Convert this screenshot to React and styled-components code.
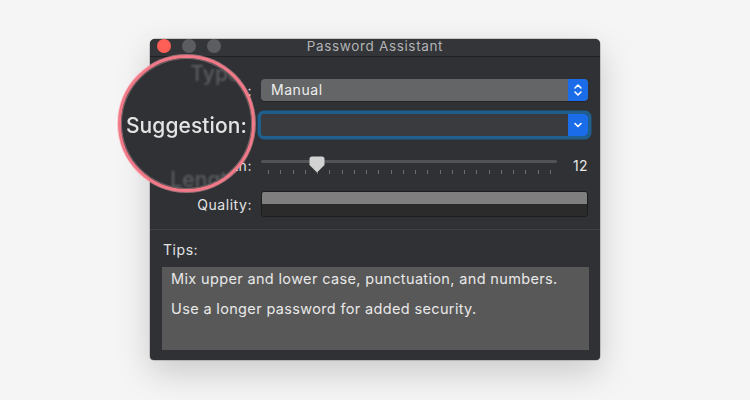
import React from 'react';
import styled, { createGlobalStyle } from 'styled-components';

const GlobalStyle = createGlobalStyle`
  html, body {
    margin: 0;
    padding: 0;
    background: #f5f5f5;
    font-family: Inter, "Noto Sans", "Liberation Sans", sans-serif;
  }
`;

const Page = styled.div`
  width: 750px;
  height: 400px;
  padding: 39px 0 0 150px;
  box-sizing: border-box;
  overflow: hidden;
`;

const Window = styled.div`
  position: relative;
  width: 450px;
  height: 321px;
  background: #2f3134;
  border-radius: 5px 5px 4px 4px;
  box-shadow: 0 12px 34px rgba(0, 0, 0, 0.18), 0 0 0 0.5px rgba(0, 0, 0, 0.3);
  display: flex;
  flex-direction: column;
`;

const TitleBar = styled.div`
  position: relative;
  height: 17px;
  flex: none;
  display: flex;
  align-items: flex-start;
  gap: 11px;
  padding-left: 7px;
  background: #333538;
  border-bottom: 1px solid #1f2022;
  border-radius: 5px 5px 0 0;
`;

const Light = styled.span`
  width: 14px;
  height: 14px;
  border-radius: 50%;
  background: ${(p) => p.color};
`;

const Title = styled.div`
  position: absolute;
  left: 0;
  right: 0;
  top: 0;
  height: 15px;
  line-height: 15px;
  text-align: center;
  font-size: 13.5px;
  color: #b2b3b5;
  letter-spacing: 0.65px;
`;

const Form = styled.div`
  display: flex;
  flex-direction: column;
  padding: 22px 12px 0 0;
`;

const Row = styled.div`
  display: grid;
  grid-template-columns: 102px 1fr;
  column-gap: 9px;
  align-items: center;
  height: ${(p) => p.h}px;
  margin-top: ${(p) => p.mt || 0}px;
`;

const Label = styled.div`
  text-align: right;
  font-size: 14px;
  letter-spacing: 0.55px;
  color: #e2e3e4;
`;

const Popup = styled.div`
  height: 22px;
  display: flex;
  border-radius: 4px;
  background: #646566;
  overflow: hidden;
  box-shadow: 0 1px 0 rgba(0, 0, 0, 0.25);
`;

const PopupText = styled.div`
  flex: 1;
  padding-left: 10px;
  line-height: 22px;
  font-size: 14px;
  letter-spacing: 0.55px;
  color: #ededed;
`;

const BlueButton = styled.div`
  width: 20px;
  flex: none;
  display: flex;
  align-items: center;
  justify-content: center;
  background: #1a6ce8;
  border-radius: 0 4px 4px 0;
`;

const Combo = styled(Popup)`
  background: #3a3b3e;
  box-shadow: 0 0 0 3.5px #1e5f8d;
  border-radius: 3px;
`;

const SliderRow = styled.div`
  display: flex;
  align-items: center;
`;

const Slider = styled.div`
  position: relative;
  flex: 1;
  height: 30px;
`;

const Track = styled.div`
  position: absolute;
  left: 0;
  right: 0;
  top: 10px;
  height: 3px;
  border-radius: 2px;
  background: #515357;
`;

const Ticks = styled.div`
  position: absolute;
  left: 7px;
  right: 6px;
  top: 20px;
  display: flex;
  justify-content: space-between;
`;

const Tick = styled.span`
  width: 1px;
  height: 4px;
  background: #6b6d70;
`;

const Thumb = styled.svg`
  position: absolute;
  left: 48px;
  top: 6px;
`;

const Value = styled.div`
  width: 31px;
  text-align: right;
  font-size: 14px;
  letter-spacing: 0.4px;
  color: #e6e6e6;
`;

const Meter = styled.div`
  height: 26px;
  box-sizing: border-box;
  border: 1px solid #1c1d1f;
  border-radius: 3px;
  overflow: hidden;
  display: flex;
  flex-direction: column;
`;

const MeterHalf = styled.div`
  flex: 1;
  background: ${(p) => p.color};
`;

const Separator = styled.div`
  height: 1px;
  background: #3f4145;
  margin-top: 12px;
`;

const Tips = styled.div`
  flex: 1;
  display: flex;
  flex-direction: column;
  padding: 12px 11px 10px 12px;
`;

const TipsLabel = styled.div`
  font-size: 14px;
  letter-spacing: 0.55px;
  color: #e2e3e4;
  margin-left: 1px;
  line-height: 16px;
`;

const TipsBox = styled.div`
  flex: 1;
  margin-top: 9px;
  background: #585858;
  padding: 3px 9px 0;
`;

const Tip = styled.p`
  margin: 0 0 12px;
  font-size: 14.5px;
  letter-spacing: 0.35px;
  line-height: 18px;
  color: #e8e8e8;
`;

const Magnifier = styled.div`
  position: absolute;
  left: -32px;
  top: 16px;
  width: 137px;
  height: 137px;
  box-sizing: border-box;
  border-radius: 50%;
  border: 3px solid #f17988;
  background: #2f3134;
  overflow: hidden;
  box-shadow: 0 0 0 1px rgba(255, 170, 180, 0.5), inset 0 0 0 1px rgba(255, 200, 205, 0.35);
  display: flex;
  flex-direction: column;
  align-items: flex-end;
  padding-right: 5px;
`;

const BigLabel = styled.div`
  font-size: 21px;
  font-weight: 500;
  line-height: 52px;
  letter-spacing: 0.1px;
  color: ${(p) => (p.dim ? '#5a5c60' : '#e4e4e4')};
  filter: blur(${(p) => (p.dim ? 1.2 : 0.3)}px);
  margin-top: ${(p) => p.mt || 0}px;
  white-space: nowrap;
`;

const Stepper = () => (
  <svg width="10" height="14" viewBox="0 0 10 14">
    <path d="M2 5 L5 2 L8 5 M2 9 L5 12 L8 9" fill="none" stroke="#fff" strokeWidth="1.5" strokeLinecap="round" strokeLinejoin="round" />
  </svg>
);

const Chevron = () => (
  <svg width="10" height="8" viewBox="0 0 10 8">
    <path d="M2 2.5 L5 5.5 L8 2.5" fill="none" stroke="#fff" strokeWidth="1.6" strokeLinecap="round" strokeLinejoin="round" />
  </svg>
);

const tips = [
  'Mix upper and lower case, punctuation, and numbers.',
  'Use a longer password for added security.',
];

export default function App() {
  return (
    <Page>
      <GlobalStyle />
      <Window>
        <TitleBar>
          <Light color="#fd5f57" />
          <Light color="#5c5d60" />
          <Light color="#5c5d60" />
          <Title>Password Assistant</Title>
        </TitleBar>

        <Form>
          <Row h={22}>
            <Label>Type:</Label>
            <Popup>
              <PopupText>Manual</PopupText>
              <BlueButton>
                <Stepper />
              </BlueButton>
            </Popup>
          </Row>
          <Row h={22} mt={13}>
            <Label>Suggestion:</Label>
            <Combo>
              <PopupText />
              <BlueButton>
                <Chevron />
              </BlueButton>
            </Combo>
          </Row>
          <Row h={30} mt={14}>
            <Label>Length:</Label>
            <SliderRow>
              <Slider>
                <Track />
                <Ticks>
                  {Array.from({ length: 24 }).map((_, i) => (
                    <Tick key={i} />
                  ))}
                </Ticks>
                <Thumb width="16" height="17" viewBox="0 0 16 17">
                  <path d="M3 0.5 H13 Q15.5 0.5 15.5 3 V9 L8 16.5 L0.5 9 V3 Q0.5 0.5 3 0.5 Z" fill="#d2d2d2" />
                </Thumb>
              </Slider>
              <Value>12</Value>
            </SliderRow>
          </Row>
          <Row h={26} mt={11}>
            <Label>Quality:</Label>
            <Meter>
              <MeterHalf color="#7f7f7f" />
              <MeterHalf color="#2b2b2c" />
            </Meter>
          </Row>
        </Form>

        <Separator />

        <Tips>
          <TipsLabel>Tips:</TipsLabel>
          <TipsBox>
            {tips.map((t) => (
              <Tip key={t}>{t}</Tip>
            ))}
          </TipsBox>
        </Tips>

        <Magnifier>
          <BigLabel dim mt={-10}>Type:</BigLabel>
          <BigLabel>Suggestion:</BigLabel>
          <BigLabel dim mt={2}>Length:</BigLabel>
        </Magnifier>
      </Window>
    </Page>
  );
}
